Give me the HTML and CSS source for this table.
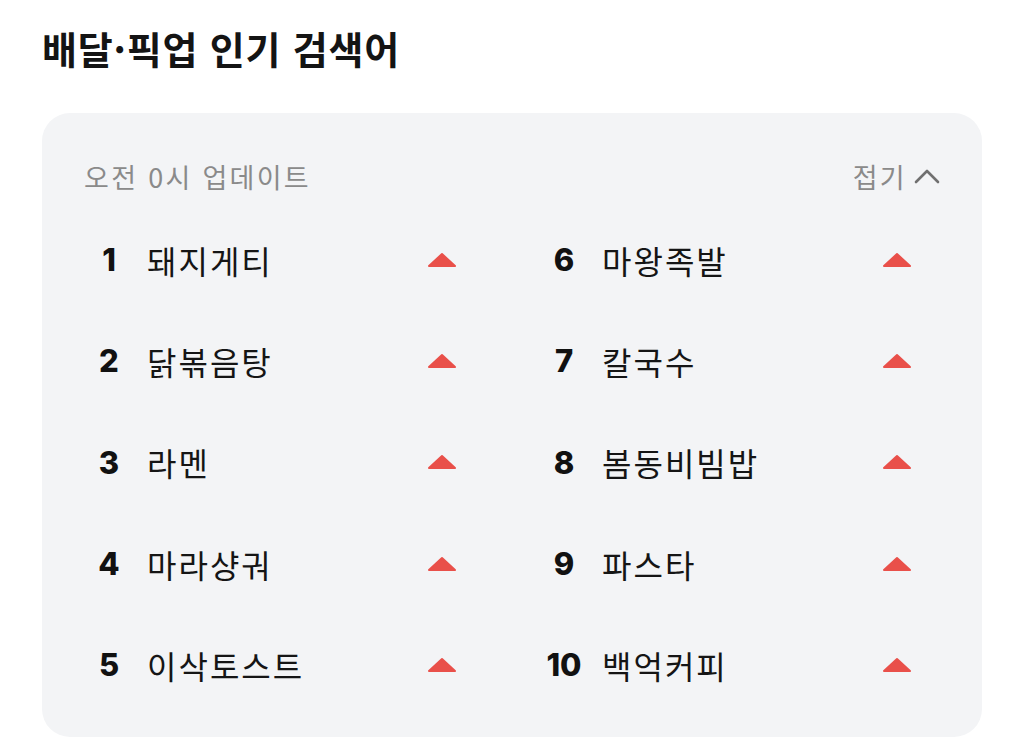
FILE: index.html
```html
<!DOCTYPE html>
<html lang="ko">
<head>
<meta charset="utf-8">
<link rel="stylesheet" href="styles.css">
</head>
<body>
<main class="page">
  <h1 class="title">배달·픽업 인기 검색어</h1>
  <section class="card">
    <div class="card-head">
      <span class="updated">오전 0시 업데이트</span>
      <button class="fold">접기<svg class="chev" width="26" height="16" viewBox="0 0 26 16"><path d="M2 14 L13 3 L24 14" fill="none" stroke="#707070" stroke-width="2.6" stroke-linecap="round" stroke-linejoin="round"/></svg></button>
    </div>
    <ol class="ranks">
      <li class="row"><span class="num">1</span><span class="name">돼지게티</span><svg class="up" width="30" height="16" viewBox="0 0 30 16"><path d="M15 2 L28 14 L2 14 Z" fill="#e9504a" stroke="#e9504a" stroke-width="2" stroke-linejoin="round"/></svg></li>
      <li class="row"><span class="num">6</span><span class="name">마왕족발</span><svg class="up" width="30" height="16" viewBox="0 0 30 16"><path d="M15 2 L28 14 L2 14 Z" fill="#e9504a" stroke="#e9504a" stroke-width="2" stroke-linejoin="round"/></svg></li>
      <li class="row"><span class="num">2</span><span class="name">닭볶음탕</span><svg class="up" width="30" height="16" viewBox="0 0 30 16"><path d="M15 2 L28 14 L2 14 Z" fill="#e9504a" stroke="#e9504a" stroke-width="2" stroke-linejoin="round"/></svg></li>
      <li class="row"><span class="num">7</span><span class="name">칼국수</span><svg class="up" width="30" height="16" viewBox="0 0 30 16"><path d="M15 2 L28 14 L2 14 Z" fill="#e9504a" stroke="#e9504a" stroke-width="2" stroke-linejoin="round"/></svg></li>
      <li class="row"><span class="num">3</span><span class="name">라멘</span><svg class="up" width="30" height="16" viewBox="0 0 30 16"><path d="M15 2 L28 14 L2 14 Z" fill="#e9504a" stroke="#e9504a" stroke-width="2" stroke-linejoin="round"/></svg></li>
      <li class="row"><span class="num">8</span><span class="name">봄동비빔밥</span><svg class="up" width="30" height="16" viewBox="0 0 30 16"><path d="M15 2 L28 14 L2 14 Z" fill="#e9504a" stroke="#e9504a" stroke-width="2" stroke-linejoin="round"/></svg></li>
      <li class="row"><span class="num">4</span><span class="name">마라샹궈</span><svg class="up" width="30" height="16" viewBox="0 0 30 16"><path d="M15 2 L28 14 L2 14 Z" fill="#e9504a" stroke="#e9504a" stroke-width="2" stroke-linejoin="round"/></svg></li>
      <li class="row"><span class="num">9</span><span class="name">파스타</span><svg class="up" width="30" height="16" viewBox="0 0 30 16"><path d="M15 2 L28 14 L2 14 Z" fill="#e9504a" stroke="#e9504a" stroke-width="2" stroke-linejoin="round"/></svg></li>
      <li class="row"><span class="num">5</span><span class="name">이삭토스트</span><svg class="up" width="30" height="16" viewBox="0 0 30 16"><path d="M15 2 L28 14 L2 14 Z" fill="#e9504a" stroke="#e9504a" stroke-width="2" stroke-linejoin="round"/></svg></li>
      <li class="row"><span class="num">10</span><span class="name">백억커피</span><svg class="up" width="30" height="16" viewBox="0 0 30 16"><path d="M15 2 L28 14 L2 14 Z" fill="#e9504a" stroke="#e9504a" stroke-width="2" stroke-linejoin="round"/></svg></li>
    </ol>
  </section>
</main>
</body>
</html>
```
FILE: styles.css
```css
* { box-sizing: border-box; }
html, body { margin: 0; padding: 0; background: #ffffff; }
body {
  font-family: "Noto Sans CJK KR", "Noto Sans", sans-serif;
  color: #111111;
  width: 1024px;
  height: 756px;
  overflow: hidden;
}
.page {
  padding: 20px 42px 0 42px;
}
.title {
  margin: 0;
  font-size: 38px;
  font-weight: 700;
  line-height: 56px;
  letter-spacing: 0.8px;
  color: #141414;
}
.card {
  margin-top: 37px;
  width: 940px;
  height: 624px;
  background: #f3f4f6;
  border-radius: 28px;
  padding: 43px 42px 0 42px;
}
.card-head {
  display: flex;
  justify-content: space-between;
  align-items: center;
  height: 40px;
}
.updated {
  font-size: 27px;
  color: #8a8a8a;
  letter-spacing: 2.3px;
}
.fold {
  border: 0;
  background: none;
  padding: 0;
  display: flex;
  align-items: center;
  gap: 7px;
  font-family: inherit;
  font-size: 27px;
  letter-spacing: 2.3px;
  color: #8a8a8a;
}
.chev { display: block; }
.ranks {
  list-style: none;
  margin: 13px 0 0 0;
  padding: 0;
  display: grid;
  grid-template-columns: 401px 401px;
  column-gap: 54px;
  grid-auto-rows: 101.3px;
}
.row {
  display: flex;
  align-items: center;
}
.num {
  width: 50px;
  text-align: center;
  font-family: "Inter", "Noto Sans", sans-serif;
  font-weight: 800;
  font-size: 31px;
  margin-right: 13px;
  color: #111;
}
.name {
  flex: 1;
  font-size: 32px;
  letter-spacing: 2px;
  color: #151515;
}
.up {
  display: block;
  margin-right: 28px;
}
```
